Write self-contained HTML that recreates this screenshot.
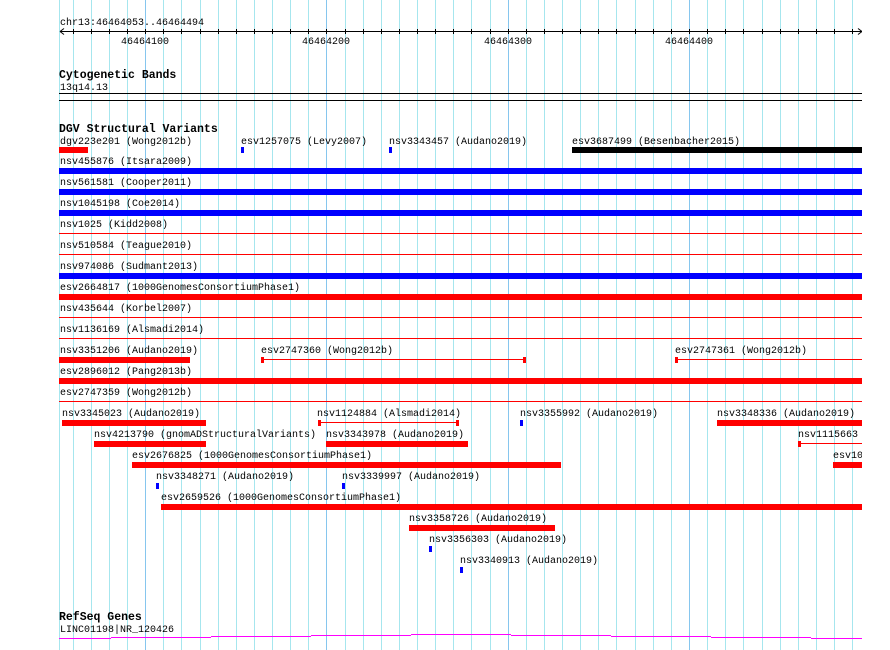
<!DOCTYPE html>
<html><head><meta charset="utf-8"><style>
html,body{margin:0;padding:0;background:#fff;width:890px;height:650px;overflow:hidden}
svg{display:block}
text{font-family:"Liberation Mono",monospace;font-size:10px;fill:#000}
.b{font-weight:bold;font-size:11.5px}
</style></head><body>
<svg width="890" height="650" viewBox="0 0 890 650" xmlns="http://www.w3.org/2000/svg" shape-rendering="crispEdges">
<g stroke="#a6e6ee" stroke-width="1">
<line x1="59.5" y1="0" x2="59.5" y2="650"/>
<line x1="73.5" y1="0" x2="73.5" y2="650"/><line x1="91.5" y1="0" x2="91.5" y2="650"/><line x1="109.5" y1="0" x2="109.5" y2="650"/><line x1="127.5" y1="0" x2="127.5" y2="650"/>
<line x1="163.5" y1="0" x2="163.5" y2="650"/><line x1="181.5" y1="0" x2="181.5" y2="650"/><line x1="200.5" y1="0" x2="200.5" y2="650"/><line x1="218.5" y1="0" x2="218.5" y2="650"/><line x1="236.5" y1="0" x2="236.5" y2="650"/><line x1="254.5" y1="0" x2="254.5" y2="650"/><line x1="272.5" y1="0" x2="272.5" y2="650"/><line x1="290.5" y1="0" x2="290.5" y2="650"/><line x1="308.5" y1="0" x2="308.5" y2="650"/>
<line x1="345.5" y1="0" x2="345.5" y2="650"/><line x1="363.5" y1="0" x2="363.5" y2="650"/><line x1="381.5" y1="0" x2="381.5" y2="650"/><line x1="399.5" y1="0" x2="399.5" y2="650"/><line x1="417.5" y1="0" x2="417.5" y2="650"/><line x1="435.5" y1="0" x2="435.5" y2="650"/><line x1="453.5" y1="0" x2="453.5" y2="650"/><line x1="471.5" y1="0" x2="471.5" y2="650"/><line x1="490.5" y1="0" x2="490.5" y2="650"/>
<line x1="526.5" y1="0" x2="526.5" y2="650"/><line x1="544.5" y1="0" x2="544.5" y2="650"/><line x1="562.5" y1="0" x2="562.5" y2="650"/><line x1="580.5" y1="0" x2="580.5" y2="650"/><line x1="598.5" y1="0" x2="598.5" y2="650"/><line x1="616.5" y1="0" x2="616.5" y2="650"/><line x1="635.5" y1="0" x2="635.5" y2="650"/><line x1="653.5" y1="0" x2="653.5" y2="650"/><line x1="671.5" y1="0" x2="671.5" y2="650"/>
<line x1="707.5" y1="0" x2="707.5" y2="650"/><line x1="725.5" y1="0" x2="725.5" y2="650"/><line x1="743.5" y1="0" x2="743.5" y2="650"/><line x1="762.5" y1="0" x2="762.5" y2="650"/><line x1="780.5" y1="0" x2="780.5" y2="650"/><line x1="798.5" y1="0" x2="798.5" y2="650"/><line x1="816.5" y1="0" x2="816.5" y2="650"/><line x1="834.5" y1="0" x2="834.5" y2="650"/><line x1="852.5" y1="0" x2="852.5" y2="650"/>
</g>
<g stroke="#86c6ee" stroke-width="1">
<line x1="145.5" y1="0" x2="145.5" y2="650"/><line x1="326.5" y1="0" x2="326.5" y2="650"/><line x1="508.5" y1="0" x2="508.5" y2="650"/><line x1="689.5" y1="0" x2="689.5" y2="650"/>
</g>
<!-- axis -->
<text x="60" y="25">chr13:46464053..46464494</text>
<g stroke="#000" stroke-width="1">
<line x1="60" y1="31.5" x2="862" y2="31.5"/>
<line x1="60" y1="31.5" x2="64" y2="28.5" shape-rendering="auto"/><line x1="60" y1="31.5" x2="64" y2="34.5" shape-rendering="auto"/>
<line x1="862" y1="31.5" x2="858" y2="28.5" shape-rendering="auto"/><line x1="862" y1="31.5" x2="858" y2="34.5" shape-rendering="auto"/>
</g>
<g stroke="#000">
<path d="M73.5 29v5M91.5 29v5M109.5 29v5M127.5 29v5M145.5 29v5M163.5 29v5M181.5 29v5M200.5 29v5M218.5 29v5M236.5 29v5M254.5 29v5M272.5 29v5M290.5 29v5M308.5 29v5M326.5 29v5M345.5 29v5M363.5 29v5M381.5 29v5M399.5 29v5M417.5 29v5M435.5 29v5M453.5 29v5M471.5 29v5M490.5 29v5M508.5 29v5M526.5 29v5M544.5 29v5M562.5 29v5M580.5 29v5M598.5 29v5M616.5 29v5M635.5 29v5M653.5 29v5M671.5 29v5M689.5 29v5M707.5 29v5M725.5 29v5M743.5 29v5M762.5 29v5M780.5 29v5M798.5 29v5M816.5 29v5M834.5 29v5M852.5 29v5"/>
</g>
<text x="121" y="44">46464100</text><text x="302" y="44">46464200</text><text x="484" y="44">46464300</text><text x="665" y="44">46464400</text>
<!-- cyto -->
<text class="b" x="59" y="78">Cytogenetic Bands</text>
<text x="60" y="90">13q14.13</text>
<rect x="59" y="93" width="803" height="1" fill="#000"/>
<rect x="59" y="100" width="803" height="1" fill="#000"/>
<!-- DGV -->
<text class="b" x="59" y="132">DGV Structural Variants</text>
<text x="60" y="144">dgv223e201 (Wong2012b)</text><rect x="59" y="147" width="29" height="6" fill="#f00"/>
<text x="241" y="144">esv1257075 (Levy2007)</text><rect x="241" y="147" width="3" height="6" fill="#00f"/>
<text x="389" y="144">nsv3343457 (Audano2019)</text><rect x="389" y="147" width="3" height="6" fill="#00f"/>
<text x="572" y="144">esv3687499 (Besenbacher2015)</text><rect x="572" y="147" width="290" height="6" fill="#000"/>
<text x="60" y="164">nsv455876 (Itsara2009)</text><rect x="59" y="168" width="803" height="6" fill="#00f"/>
<text x="60" y="185">nsv561581 (Cooper2011)</text><rect x="59" y="189" width="803" height="6" fill="#00f"/>
<text x="60" y="206">nsv1045198 (Coe2014)</text><rect x="59" y="210" width="803" height="6" fill="#00f"/>
<text x="60" y="227">nsv1025 (Kidd2008)</text><rect x="59" y="233" width="803" height="1" fill="#f00"/>
<text x="60" y="248">nsv510584 (Teague2010)</text><rect x="59" y="254" width="803" height="1" fill="#f00"/>
<text x="60" y="269">nsv974086 (Sudmant2013)</text><rect x="59" y="273" width="803" height="6" fill="#00f"/>
<text x="60" y="290">esv2664817 (1000GenomesConsortiumPhase1)</text><rect x="59" y="294" width="803" height="6" fill="#f00"/>
<text x="60" y="311">nsv435644 (Korbel2007)</text><rect x="59" y="317" width="803" height="1" fill="#f00"/>
<text x="60" y="332">nsv1136169 (Alsmadi2014)</text><rect x="59" y="338" width="803" height="1" fill="#f00"/>
<text x="60" y="353">nsv3351206 (Audano2019)</text><rect x="59" y="357" width="131" height="6" fill="#f00"/>
<text x="261" y="353">esv2747360 (Wong2012b)</text><rect x="261" y="359" width="264" height="1" fill="#f00"/><rect x="261" y="357" width="3" height="6" fill="#f00"/><rect x="523" y="357" width="3" height="6" fill="#f00"/>
<text x="675" y="353">esv2747361 (Wong2012b)</text><rect x="675" y="359" width="187" height="1" fill="#f00"/><rect x="675" y="357" width="3" height="6" fill="#f00"/>
<text x="60" y="374">esv2896012 (Pang2013b)</text><rect x="59" y="378" width="803" height="6" fill="#f00"/>
<text x="60" y="395">esv2747359 (Wong2012b)</text><rect x="59" y="401" width="803" height="1" fill="#f00"/>
<text x="62" y="416">nsv3345023 (Audano2019)</text><rect x="62" y="420" width="144" height="6" fill="#f00"/>
<text x="317" y="416">nsv1124884 (Alsmadi2014)</text><rect x="318" y="422" width="140" height="1" fill="#f00"/><rect x="318" y="420" width="3" height="6" fill="#f00"/><rect x="456" y="420" width="3" height="6" fill="#f00"/>
<text x="520" y="416">nsv3355992 (Audano2019)</text><rect x="520" y="420" width="3" height="6" fill="#00f"/>
<text x="717" y="416">nsv3348336 (Audano2019)</text><rect x="717" y="420" width="145" height="6" fill="#f00"/>
<text x="94" y="437">nsv4213790 (gnomADStructuralVariants)</text><rect x="94" y="441" width="112" height="6" fill="#f00"/>
<text x="326" y="437">nsv3343978 (Audano2019)</text><rect x="326" y="441" width="142" height="6" fill="#f00"/>
<text x="798" y="437">nsv1115663 (Alsmadi2014)</text><rect x="798" y="443" width="64" height="1" fill="#f00"/><rect x="798" y="441" width="3" height="6" fill="#f00"/>
<text x="132" y="458">esv2676825 (1000GenomesConsortiumPhase1)</text><rect x="132" y="462" width="429" height="6" fill="#f00"/>
<text x="833" y="458">esv1089933</text><rect x="833" y="462" width="29" height="6" fill="#f00"/>
<text x="156" y="479">nsv3348271 (Audano2019)</text><rect x="156" y="483" width="3" height="6" fill="#00f"/>
<text x="342" y="479">nsv3339997 (Audano2019)</text><rect x="342" y="483" width="3" height="6" fill="#00f"/>
<text x="161" y="500">esv2659526 (1000GenomesConsortiumPhase1)</text><rect x="161" y="504" width="701" height="6" fill="#f00"/>
<text x="409" y="521">nsv3358726 (Audano2019)</text><rect x="409" y="525" width="146" height="6" fill="#f00"/>
<text x="429" y="542">nsv3356303 (Audano2019)</text><rect x="429" y="546" width="3" height="6" fill="#00f"/>
<text x="460" y="563">nsv3340913 (Audano2019)</text><rect x="460" y="567" width="3" height="6" fill="#00f"/>
<rect x="862" y="0" width="28" height="650" fill="#fff"/>
<!-- RefSeq -->
<text class="b" x="59" y="620">RefSeq Genes</text>
<text x="60" y="632">LINC01198|NR_120426</text>
<g fill="#f0f">
<rect x="59" y="638" width="52" height="1"/><rect x="111" y="637" width="100" height="1"/><rect x="211" y="636" width="100" height="1"/><rect x="311" y="635" width="100" height="1"/><rect x="411" y="634" width="100" height="1"/><rect x="511" y="635" width="100" height="1"/><rect x="611" y="636" width="100" height="1"/><rect x="711" y="637" width="100" height="1"/><rect x="811" y="638" width="51" height="1"/>
</g>
</svg>
</body></html>
